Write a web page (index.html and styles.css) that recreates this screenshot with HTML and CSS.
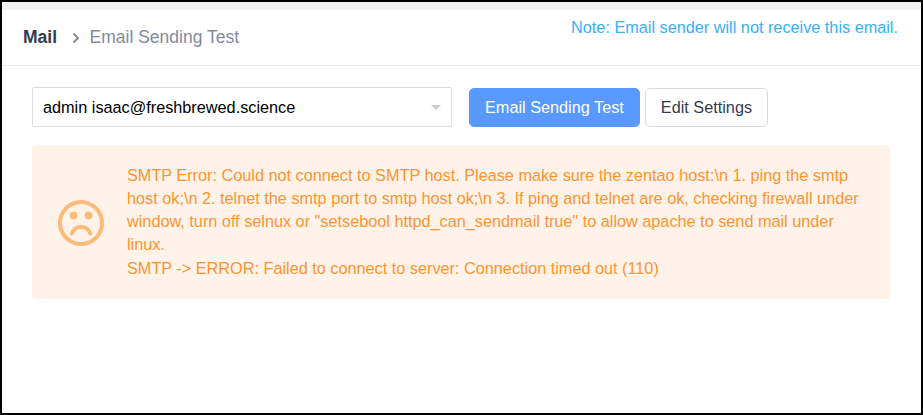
FILE: index.html
```html
<!DOCTYPE html>
<html lang="en">

<head>
    <meta charset="UTF-8">
    <meta name="viewport" content="width=device-width, initial-scale=1.0">
    <title>Email Sending Test</title>
    <link rel="stylesheet" href="styles.css">
</head>

<body>
    <div class="page">
        <header class="main-header">
            <div class="heading">
                <strong class="heading-module">Mail</strong>
                <svg class="heading-arrow" width="8" height="12" viewBox="0 0 8 12">
                    <path d="M1.5 1.5L6 6L1.5 10.5" fill="none" stroke="#838a9d" stroke-width="1.9" />
                </svg>
                <span class="heading-title">Email Sending Test</span>
            </div>
            <span class="heading-note">Note: Email sender will not receive this email.</span>
        </header>

        <main class="content">
            <form class="test-form">
                <div class="picker">
                    <span>admin isaac@freshbrewed.science</span>
                    <i class="caret"></i>
                </div>
                <button type="button" class="btn btn-primary">Email Sending Test</button>
                <button type="button" class="btn">Edit Settings</button>
            </form>

            <div class="alert">
                <svg class="alert-icon" width="46" height="46" viewBox="0 0 46 46">
                    <circle cx="23" cy="23" r="21" fill="none" stroke="#ffba78" stroke-width="4" />
                    <circle cx="15.5" cy="15.3" r="3.9" fill="#ffba78" />
                    <circle cx="30.5" cy="15.3" r="3.9" fill="#ffba78" />
                    <path d="M13.8 33.6C15.2 29.3 18.8 26.8 23 26.8S30.8 29.3 32.2 33.6" fill="none" stroke="#ffba78" stroke-width="3.8" stroke-linecap="round" />
                </svg>
                <div class="alert-text">
                    SMTP Error: Could not connect to SMTP host. Please make sure the zentao host:\n 1. ping the smtp host ok;\n 2. telnet the smtp port to smtp host ok;\n 3. If ping and telnet are ok, checking firewall under window, turn off selnux or "setsebool httpd_can_sendmail true" to allow apache to send mail under linux.<br>
                    SMTP -&gt; ERROR: Failed to connect to server: Connection timed out (110)
                </div>
            </div>
        </main>
    </div>
</body>

</html>
```

FILE: styles.css
```css
* {
    box-sizing: border-box;
}

body {
    margin: 0;
    font-family: "Liberation Sans", Arial, sans-serif;
    font-size: 16.25px;
    line-height: 23.2px;
    color: #313c52;
}

.page {
    height: 415px;
    border: 2px solid #000;
    background: #fff;
}

/* Header with the grey strip of the window above it */
.main-header {
    display: flex;
    justify-content: space-between;
    height: 64px;
    padding: 0 23px 0 21px;
    border-top: 8px solid #f1f3f5;
    border-bottom: 1px solid #ebebeb;
}

.heading {
    display: flex;
    align-items: center;
    font-size: 17.5px;
}

.heading-arrow {
    margin: 0 9.5px 0 15px;
}

.heading-title {
    color: #838a9d;
}

.heading-note {
    padding-top: 6px;
    color: #38b0fb;
}

.content {
    padding: 21px 31px 0 30px;
}

/* Form row */
.test-form {
    display: flex;
    align-items: flex-end;
}

.picker {
    display: flex;
    align-items: center;
    justify-content: space-between;
    width: 420px;
    height: 40px;
    margin-right: 17px;
    padding: 1px 10px 0;
    border: 1px solid #dcdcdc;
    border-radius: 2px;
    color: #000;
}

.caret {
    border: 5px solid transparent;
    border-top-color: #c9cdd8;
    border-bottom: 0;
}

.btn {
    height: 39px;
    padding: 0 15px;
    border: 1px solid #d8dbde;
    border-radius: 5px;
    background: #fff;
    color: #313c52;
    font: inherit;
    white-space: nowrap;
}

.btn-primary {
    margin-right: 5px;
    border-color: #5999ff;
    background: #5999ff;
    color: #fff;
}

/* Error message */
.alert {
    display: flex;
    align-items: center;
    height: 154px;
    margin-top: 18px;
    padding: 0 26px;
    border-radius: 4px;
    background: #fff3e9;
    color: #ff9331;
}

.alert-icon {
    flex: none;
    margin: 2px 23px 0 0;
}

.alert-text {
    padding-bottom: 0.4px;
}
```
